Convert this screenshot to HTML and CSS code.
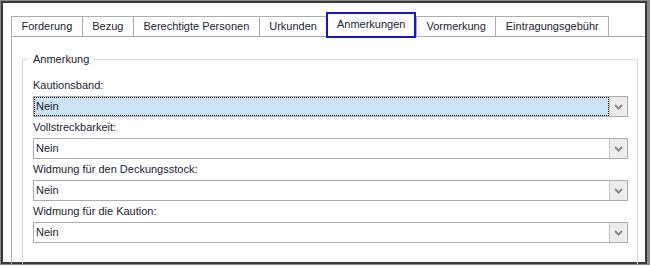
FILE: index.html
```html
<!DOCTYPE html>
<html lang="de">

<head>
    <meta charset="UTF-8">
    <meta name="viewport" content="width=device-width, initial-scale=1.0">
    <title>Anmerkungen</title>
    <link rel="stylesheet" href="styles.css">
</head>

<body>
    <div class="window">
        <div class="frame">
            <div class="tabs">
                <div class="tab">Forderung</div>
                <div class="tab">Bezug</div>
                <div class="tab">Berechtigte Personen</div>
                <div class="tab">Urkunden</div>
                <div class="tab active">Anmerkungen</div>
                <div class="tab">Vormerkung</div>
                <div class="tab">Eintragungsgebühr</div>
            </div>

            <div class="panel">
                <fieldset class="group">
                    <legend>Anmerkung</legend>

                    <div class="field">
                        <label>Kautionsband:</label>
                        <div class="combo focused">
                            <span class="value">Nein</span>
                            <span class="drop"><svg width="9" height="6" viewBox="0 0 9 6"><path d="M1 1 L4.5 4.5 L8 1" fill="none" stroke="#8a8a8a" stroke-width="2"/></svg></span>
                        </div>
                    </div>

                    <div class="field">
                        <label>Vollstreckbarkeit:</label>
                        <div class="combo">
                            <span class="value">Nein</span>
                            <span class="drop"><svg width="9" height="6" viewBox="0 0 9 6"><path d="M1 1 L4.5 4.5 L8 1" fill="none" stroke="#8a8a8a" stroke-width="2"/></svg></span>
                        </div>
                    </div>

                    <div class="field">
                        <label>Widmung für den Deckungsstock:</label>
                        <div class="combo">
                            <span class="value">Nein</span>
                            <span class="drop"><svg width="9" height="6" viewBox="0 0 9 6"><path d="M1 1 L4.5 4.5 L8 1" fill="none" stroke="#8a8a8a" stroke-width="2"/></svg></span>
                        </div>
                    </div>

                    <div class="field">
                        <label>Widmung für die Kaution:</label>
                        <div class="combo">
                            <span class="value">Nein</span>
                            <span class="drop"><svg width="9" height="6" viewBox="0 0 9 6"><path d="M1 1 L4.5 4.5 L8 1" fill="none" stroke="#8a8a8a" stroke-width="2"/></svg></span>
                        </div>
                    </div>
                </fieldset>
            </div>
        </div>
    </div>
</body>

</html>
```

FILE: styles.css
```css
body {
    margin: 0;
    background-color: #fff;
    font-family: "Liberation Sans", Arial, sans-serif;
    font-size: 11px;
    color: #1c2533;
}

/* Fensterrahmen */
.window {
    width: 650px;
    height: 265px;
    box-sizing: border-box;
    border: 1px solid #8a8a8a;
    border-right-width: 3px;
    overflow: hidden;
}

.frame {
    height: 100%;
    box-sizing: border-box;
    border: 2px solid #383838;
    padding: 13px 0 0 8px;
    background-color: #fff;
}

/* Reiter */
.tabs {
    display: flex;
    align-items: flex-end;
    height: 20px;
}

.tab {
    height: 20px;
    box-sizing: border-box;
    padding: 0 9.5px;
    margin-left: -1px;
    border: 1px solid #adadad;
    border-bottom: none;
    line-height: 19px;
    white-space: nowrap;
    background-color: #fff;
}

.tab:first-child {
    margin-left: 0;
}

.tab.active {
    position: relative;
    z-index: 1;
    height: 26px;
    margin: 0 1px -2px -1px;
    padding: 0 8.5px;
    border: 2px solid #1212e6;
    line-height: 20px;
}

.panel {
    border-top: 1px solid #adadad;
    border-left: 1px solid #adadad;
    padding: 16px 7px 0 10px;
    height: 300px;
}

/* Gruppe */
.group {
    margin: 0;
    padding: 13px 9px 0 10px;
    border: 1px solid #d9d9d9;
    height: 300px;
}

.group legend {
    padding: 0 4px;
    margin-left: -4px;
    line-height: 13px;
}

.field {
    margin-bottom: 4px;
}

.field label {
    display: block;
    line-height: 13px;
    margin-bottom: 4px;
}

.combo {
    display: flex;
    height: 21px;
    box-sizing: border-box;
    border: 1px solid #adadad;
    background-color: #fff;
}

.combo .value {
    flex: 1;
    padding-left: 2px;
    line-height: 19px;
}

.combo.focused .value {
    background-color: #cce4f7;
    outline: 1px dotted #000;
    outline-offset: -1px;
}

.combo .drop {
    width: 17px;
    border-left: 1px solid #c4c4c4;
    background-color: #ececec;
    display: flex;
    align-items: center;
    justify-content: center;
}
```
